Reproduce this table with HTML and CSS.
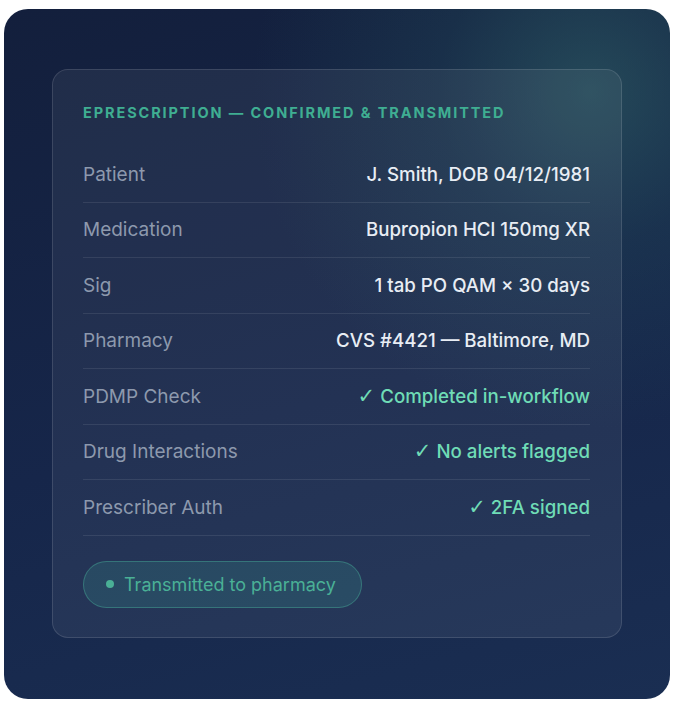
FILE: index.html
```html
<!DOCTYPE html>
<html>
<head>
<meta charset="utf-8">
<link rel="stylesheet" href="styles.css">
</head>
<body>
<div class="panel">
  <div class="card">
    <div class="title">EPRESCRIPTION — CONFIRMED &amp; TRANSMITTED</div>
    <div class="rows">
      <div class="row"><span class="label">Patient</span><span class="value">J. Smith, DOB 04/12/1981</span></div>
      <div class="row"><span class="label">Medication</span><span class="value">Bupropion HCl 150mg XR</span></div>
      <div class="row"><span class="label">Sig</span><span class="value">1 tab PO QAM × 30 days</span></div>
      <div class="row"><span class="label">Pharmacy</span><span class="value">CVS #4421 — Baltimore, MD</span></div>
      <div class="row"><span class="label">PDMP Check</span><span class="value ok"><span class="check">✓</span> Completed in-workflow</span></div>
      <div class="row"><span class="label">Drug Interactions</span><span class="value ok"><span class="check">✓</span> No alerts flagged</span></div>
      <div class="row"><span class="label">Prescriber Auth</span><span class="value ok"><span class="check">✓</span> 2FA signed</span></div>
    </div>
    <div class="badge"><span class="dot"></span>Transmitted to pharmacy</div>
  </div>
</div>
</body>
</html>
```
FILE: styles.css
```css
* { box-sizing: border-box; }
html, body { margin: 0; padding: 0; background: #ffffff; }
body {
  padding: 9px 6px 4px 4px;
  font-family: Inter, "Open Sans", sans-serif;
}
.panel {
  width: 666px;
  height: 690px;
  border-radius: 24px;
  padding: 60px 48px 61px 48px;
  background:
    radial-gradient(circle at 88% 12%, rgba(50, 105, 108, 0.55) 0, rgba(40, 90, 100, 0.25) 18%, rgba(30, 60, 90, 0) 40%),
    linear-gradient(165deg, #131f3c 0%, #16264a 55%, #1a2e52 100%);
}
.card {
  height: 569px;
  border-radius: 16px;
  border: 1px solid rgba(255, 255, 255, 0.12);
  background: rgba(255, 255, 255, 0.06);
  padding: 32px 31px 30px 30px;
}
.title {
  color: #3fae92;
  font-weight: 700;
  font-size: 14.5px;
  line-height: 20px;
  letter-spacing: 1.9px;
  margin-top: 1px;
}
.rows { margin-top: 24px; }
.row {
  display: flex;
  justify-content: space-between;
  align-items: center;
  height: 55.5px;
  border-bottom: 1px solid rgba(255, 255, 255, 0.09);
}
.label { color: #8d99ad; font-size: 19px; }
.value { color: #e8edf4; font-weight: 500; font-size: 18.7px; }
.value.ok { color: #6fdcb6; }
.check { font-family: "DejaVu Sans", sans-serif; font-weight: 400; font-size: 21px; line-height: 1; }
.badge {
  margin-top: 25px;
  display: inline-flex;
  align-items: center;
  height: 47px;
  padding: 0 25px 0 22px;
  border-radius: 24px;
  border: 1px solid rgba(70, 170, 150, 0.45);
  background: rgba(60, 160, 150, 0.2);
  color: #4ab096;
  font-size: 18px;
  font-weight: 400;
}
.dot {
  width: 8px;
  height: 8px;
  border-radius: 50%;
  background: #4ab096;
  margin-right: 10px;
}
```
